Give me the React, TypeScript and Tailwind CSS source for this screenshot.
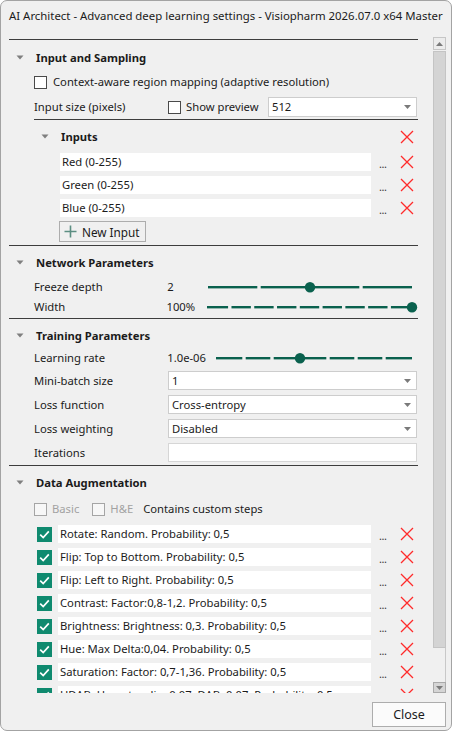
import React from "react";

const RED = "#ff2a2a";

function Tri() {
  return (
    <svg width="8" height="5" viewBox="0 0 8 5" className="block">
      <path d="M0.5 0.5h7L4 4.5z" fill="#7f7f7f" />
    </svg>
  );
}

function RedX() {
  return (
    <svg width="14" height="14" viewBox="0 0 14 14" className="block">
      <path d="M1 1L13 13M13 1L1 13" stroke={RED} strokeWidth="1.3" />
    </svg>
  );
}

function Arrow() {
  return (
    <svg width="7" height="4" viewBox="0 0 7 4" className="block">
      <path d="M0 0h7L3.5 4z" fill="#7a7a7a" />
    </svg>
  );
}

function Box() {
  return <div className="w-[13px] h-[13px] bg-white border border-[#4a4a4a] shrink-0" />;
}

function DisBox() {
  return <div className="w-[13px] h-[13px] bg-[#f7f7f7] border border-[#a5a5a5] shrink-0" />;
}

function Teal() {
  return (
    <div className="w-[15px] h-[15px] bg-[#0f8a6f] flex items-center justify-center shrink-0">
      <svg width="11" height="9" viewBox="0 0 11 9" className="block">
        <path d="M1.2 4.6l3 3 5.6-6.2" stroke="white" strokeWidth="1.7" fill="none" />
      </svg>
    </div>
  );
}

function Slider({ len, n, t }: { len: number; n: number; t: number }) {
  const pitch = len / n;
  const segs = [];
  for (let k = 0; k < n; k++) {
    const a = k * pitch + (k > 0 ? 1.7 : 0);
    const b = (k + 1) * pitch - (k < n - 1 ? 1.7 : 0);
    segs.push(<rect key={k} x={a + 1} y={5} width={b - a} height={2.4} fill="#0a614e" />);
  }
  return (
    <svg width={len + 7} height="12" viewBox={`0 0 ${len + 7} 12`} className="block overflow-visible">
      {segs}
      <circle cx={t * pitch + 1} cy={6.2} r={5.2} fill="#0a614e" />
    </svg>
  );
}

function Line({ indent = 0 }: { indent?: number }) {
  return (
    <div className="h-[1px] bg-[#3d3d3d]" style={indent ? { marginLeft: indent } : undefined} />
  );
}

function Header({ title, h }: { title: string; h: number }) {
  return (
    <div className="flex items-center" style={{ height: h }}>
      <div className="w-[27px] pl-[7px]">
        <Tri />
      </div>
      <span className="font-bold text-[#1b1b1b]">{title}</span>
    </div>
  );
}

function Select({ value }: { value: string }) {
  return (
    <div className="h-full flex-1 bg-white border border-[#cdcdcd] flex items-center justify-between pl-[3px] pr-[5px]">
      <span>{value}</span>
      <Arrow />
    </div>
  );
}

function Dots() {
  return (
    <div className="w-[29px] h-[18px] pl-[8px] flex items-end">
      <span className="text-[11px] leading-[14px] text-[#3a3a3a] tracking-[-0.5px]">...</span>
    </div>
  );
}

const inputs = ["Red (0-255)", "Green (0-255)", "Blue (0-255)"];
const aug = [
  "Rotate: Random. Probability: 0,5",
  "Flip: Top to Bottom. Probability: 0,5",
  "Flip: Left to Right. Probability: 0,5",
  "Contrast: Factor:0,8-1,2. Probability: 0,5",
  "Brightness: Brightness: 0,3. Probability: 0,5",
  "Hue: Max Delta:0,04. Probability: 0,5",
  "Saturation: Factor: 0,7-1,36. Probability: 0,5",
  "HDAB: Hematoxylin: 0,07. DAB: 0,07. Probability: 0,5",
];

export default function App() {
  return (
    <div className="w-[453px] h-[733px] bg-white overflow-hidden font-['Noto_Sans',sans-serif] text-[11.25px] leading-[16px] text-[#1b1b1b]">
      <div className="w-[452px] h-[731px] bg-[#f0f0f0] border border-[#a3a3a3] rounded-[7px] flex flex-col overflow-hidden">
        {/* title */}
        <div className="h-[36px] shrink-0 pt-[7px] pl-[8px] whitespace-nowrap text-[11.4px]">
          AI Architect - Advanced deep learning settings - Visiopharm 2026.07.0 x64 Master
        </div>

        {/* middle */}
        <div className="h-[656px] shrink-0 flex">
          <div className="ml-[8px] w-[409px] h-full overflow-hidden pt-[2px]">
            {/* Input and Sampling */}
            <Line />
            <Header title="Input and Sampling" h={35} />
            <div className="h-[14px] flex items-center pl-[25px] gap-[6px]">
              <Box />
              <span>Context-aware region mapping (adaptive resolution)</span>
            </div>
            <div className="mt-[8px] h-[20px] flex items-center pl-[25px] pr-[1px]">
              <span className="w-[134px]">Input size (pixels)</span>
              <div className="w-[100px] flex items-center gap-[5px]">
                <Box />
                <span>Show preview</span>
              </div>
              <Select value="512" />
            </div>
            <div className="mt-[2px]">
              <Line indent={25} />
            </div>

            {/* Inputs */}
            <div className="h-[33px] flex items-center">
              <div className="w-[52px] pl-[32px]">
                <Tri />
              </div>
              <span className="font-bold flex-1">Inputs</span>
              <div className="w-[18px]">
                <RedX />
              </div>
            </div>
            <div className="flex flex-col gap-[5px]">
              {inputs.map((s) => (
                <div key={s} className="h-[18px] flex items-center pl-[51px]">
                  <div className="w-[311px] h-[18px] bg-white pl-[2px] flex items-center">{s}</div>
                  <Dots />
                  <RedX />
                </div>
              ))}
            </div>
            <div className="mt-[4px] ml-[50px] w-[87px] h-[21px] border border-[#adadad] flex items-center pl-[4px] gap-[5px]">
              <svg width="13" height="13" viewBox="0 0 13 13" className="block">
                <path d="M6.5 0.5v12M0.5 6.5h12" stroke="#5c8e82" strokeWidth="1.6" />
              </svg>
              <span className="text-[11.75px]">New Input</span>
            </div>
            <div className="mt-[3px]">
              <Line />
            </div>

            {/* Network */}
            <Header title="Network Parameters" h={33} />
            <div className="h-[16px] flex items-center pl-[25px]">
              <span className="w-[134px]">Freeze depth</span>
              <span className="w-[40px]">2</span>
              <Slider len={204} n={4} t={2} />
            </div>
            <div className="mt-[4px] h-[16px] flex items-center pl-[25px]">
              <span className="w-[134px]">Width</span>
              <span className="w-[40px]">100%</span>
              <Slider len={205} n={9} t={9} />
            </div>
            <div className="mt-[3px]">
              <Line />
            </div>

            {/* Training */}
            <Header title="Training Parameters" h={33} />
            <div className="h-[12px] flex items-center pl-[25px]">
              <span className="w-[134px]">Learning rate</span>
              <span className="w-[48px]">1.0e-06</span>
              <Slider len={196} n={7} t={3} />
            </div>
            <div className="mt-[7px] flex flex-col gap-[5px] pl-[25px] pr-[1px]">
              {[
                ["Mini-batch size", "1"],
                ["Loss function", "Cross-entropy"],
                ["Loss weighting", "Disabled"],
              ].map(([l, v]) => (
                <div key={l} className="h-[19px] flex items-center">
                  <span className="w-[134px]">{l}</span>
                  <Select value={v} />
                </div>
              ))}
              <div className="h-[19px] flex items-center">
                <span className="w-[134px]">Iterations</span>
                <div className="flex-1 h-full bg-white border border-[#d6d6d6]" />
              </div>
            </div>
            <div className="mt-[3px]">
              <Line />
            </div>

            {/* Data Augmentation */}
            <Header title="Data Augmentation" h={33} />
            <div className="h-[20px] flex items-center pl-[25px]">
              <DisBox />
              <span className="ml-[5px] text-[#a2a2a2]">Basic</span>
              <div className="ml-[13px]">
                <DisBox />
              </div>
              <span className="ml-[5px] text-[#a2a2a2]">H&amp;E</span>
              <span className="ml-[10px]">Contains custom steps</span>
            </div>
            <div className="mt-[6px] flex flex-col gap-[5px]">
              {aug.map((s) => (
                <div key={s} className="h-[18px] flex items-center pl-[28px]">
                  <Teal />
                  <div className="ml-[6px] w-[313px] h-[18px] bg-white pl-[2px] flex items-center whitespace-nowrap overflow-hidden">
                    {s}
                  </div>
                  <Dots />
                  <RedX />
                </div>
              ))}
            </div>
          </div>

          {/* scrollbar */}
          <div className="ml-[15px] w-[13px] h-full flex flex-col">
            <div className="h-[13px] shrink-0 bg-[#ececec] border border-[#c6c6c6] flex items-center justify-center">
              <svg width="7" height="4" viewBox="0 0 7 4" className="block">
                <path d="M0 4h7L3.5 0z" fill="#7a7a7a" />
              </svg>
            </div>
            <div className="mt-[1px] h-[597px] shrink-0 bg-[#d4d4d4] border border-[#c4c4c4]" />
            <div className="flex-1 border-r border-[#c8c8c8]" />
            <div className="h-[11px] shrink-0 bg-[#d5d5d5] border border-[#a9a9a9] flex items-center justify-center">
              <Arrow />
            </div>
          </div>
        </div>

        {/* footer */}
        <div className="flex justify-end pr-[5px] pt-[9px]">
          <div className="w-[74px] h-[25px] bg-[#fbfbfb] border border-[#adadad] flex items-center justify-center text-[12.5px]">
            Close
          </div>
        </div>
      </div>
    </div>
  );
}
